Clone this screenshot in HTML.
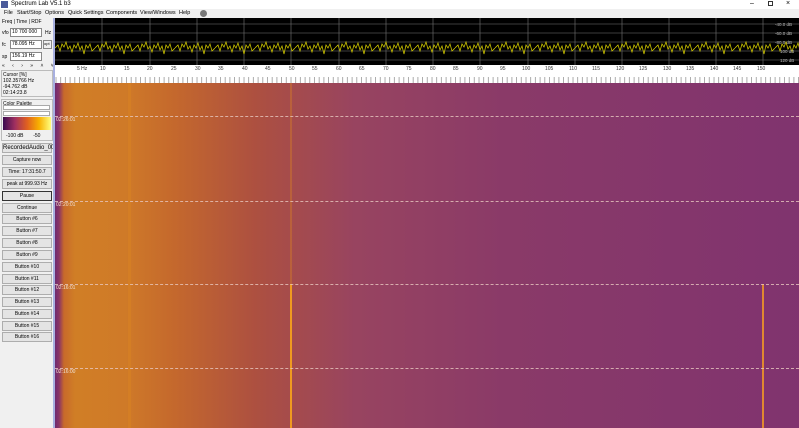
<!DOCTYPE html>
<html><head><meta charset="utf-8"><style>
*{margin:0;padding:0;box-sizing:border-box}
body{width:799px;height:428px;overflow:hidden;background:#f0f0f0;font-family:"Liberation Sans",sans-serif;position:relative;font-size:6px;color:#000}
.a{position:absolute}
.btn{position:absolute;left:2px;width:50px;height:10px;background:#e4e4e4;border:1px solid #adadad;font-size:5px;text-align:center;line-height:8px}
.m{position:absolute;top:10px;font-size:5.5px;white-space:nowrap}
.wf{left:55px;top:83px;width:744px;height:345px;background:linear-gradient(90deg,#6e2a6e 0,#8a3466 4px,#c86a2a 9px,#d07e26 20px,#cf7a28 70px,#c4682d 120px,#ad5040 200px,#984460 300px,#8a3a68 450px,#7e3270 800px)}
.dash{position:absolute;left:0;width:744px;border-top:1px dashed #e8c8c0;opacity:.8}
.ts{position:absolute;left:1px;font-size:5px;color:#f0e0d0}
</style></head><body>
<div class="a" style="left:0;top:0;width:799px;height:9px;background:#fff"></div>
<div class="a" style="left:1px;top:1px;width:7px;height:7px;background:#4a5a9a"></div>
<div class="a" style="left:11px;top:1px;font-size:6px">Spectrum Lab V5.1 b3</div>
<div class="a" style="left:750px;top:0;font-size:7px">–</div>
<div class="a" style="left:768px;top:1px;width:5px;height:5px;border:1px solid #333"></div>
<div class="a" style="left:786px;top:0;font-size:7px">×</div>
<div class="m" style="left:4px">File</div>
<div class="m" style="left:17px">Start/Stop</div>
<div class="m" style="left:45px">Options</div>
<div class="m" style="left:68px">Quick Settings</div>
<div class="m" style="left:106px">Components</div>
<div class="m" style="left:140px">View/Windows</div>
<div class="m" style="left:179px">Help</div>
<div class="a" style="left:200px;top:10px;width:7px;height:7px;border-radius:50%;background:#777"></div>
<!-- left panel -->
<div class="a" style="left:2px;top:19px;font-size:5px">Freq | Time | RDF</div>
<div class="a" style="left:2px;top:30px;font-size:5px">vfo</div><div class="a" style="left:10px;top:28px;width:32px;height:9px;background:#fff;border:1px solid #888;font-size:5px;padding-left:1px">10 700 000</div><div class="a" style="left:45px;top:30px;font-size:5px">Hz</div>
<div class="a" style="left:2px;top:42px;font-size:5px">fc</div><div class="a" style="left:10px;top:40px;width:32px;height:9px;background:#fff;border:1px solid #888;font-size:5px;padding-left:1px">78.095 Hz</div><div class="a" style="left:43px;top:40px;width:9px;height:9px;border:1px solid #888;font-size:4px">opt</div>
<div class="a" style="left:2px;top:54px;font-size:5px">sp</div><div class="a" style="left:10px;top:52px;width:32px;height:9px;background:#fff;border:1px solid #888;font-size:5px;padding-left:1px">156.19 Hz</div>
<div class="a" style="left:2px;top:63px;font-size:5px;letter-spacing:3px">« ‹ › » ˄ ˅</div>
<div class="a" style="left:1px;top:70px;width:52px;height:27px;border:1px solid #bbb;font-size:5px;line-height:6px;padding:1px">Cursor [%]<br>102.35766 Hz<br>-94.762 dB<br>02:14:23.8</div>
<div class="a" style="left:1px;top:99px;width:52px;height:42px;border:1px solid #bbb;font-size:5px;padding:1px">Color Palette</div>
<div class="a" style="left:3px;top:105px;width:47px;height:5px;background:#fff;border:1px solid #aaa"></div>
<div class="a" style="left:3px;top:111px;width:47px;height:5px;background:#fff;border:1px solid #aaa"></div>
<div class="a" style="left:3px;top:117px;width:48px;height:13px;background:linear-gradient(90deg,#3a0a50,#a03060,#e06020,#f8b000,#ffff80)"></div>
<div class="a" style="left:6px;top:133px;font-size:5px">-100 dB &nbsp; &nbsp; &nbsp; -50</div>
<div class="btn" style="top:143px;font-size:6px">RecordedAudio_004.</div>
<div class="btn" style="top:155px">Capture now</div>
<div class="btn" style="top:167px">Time: 17:31:50.7</div>
<div class="btn" style="top:179px">peak at 999.93 Hz</div>
<div class="btn" style="top:191px;border:1px solid #333">Pause</div>
<div class="btn" style="top:203px">Continue</div>
<div class="btn" style="top:214px">Button #6</div>
<div class="btn" style="top:226px">Button #7</div>
<div class="btn" style="top:238px">Button #8</div>
<div class="btn" style="top:250px">Button #9</div>
<div class="btn" style="top:262px">Button #10</div>
<div class="btn" style="top:274px">Button #11</div>
<div class="btn" style="top:285px">Button #12</div>
<div class="btn" style="top:297px">Button #13</div>
<div class="btn" style="top:309px">Button #14</div>
<div class="btn" style="top:321px">Button #15</div>
<div class="btn" style="top:332px">Button #16</div>
<div class="a" style="left:53px;top:18px;width:2px;height:410px;background:#a8b0e0"></div>
<!-- spectrum -->
<svg class="a" style="left:55px;top:18px" width="744" height="47">
<rect width="744" height="47" fill="#000"/>
<g stroke="#777" stroke-width=".6">
<line x1="0" y1="6" x2="744" y2="6"/><line x1="0" y1="15" x2="744" y2="15"/><line x1="0" y1="24" x2="744" y2="24"/><line x1="0" y1="33" x2="744" y2="33"/><line x1="0" y1="42" x2="744" y2="42"/>
<line x1="47" y1="0" x2="47" y2="47"/><line x1="95" y1="0" x2="95" y2="47"/><line x1="142" y1="0" x2="142" y2="47"/><line x1="189" y1="0" x2="189" y2="47"/><line x1="236" y1="0" x2="236" y2="47"/><line x1="284" y1="0" x2="284" y2="47"/><line x1="331" y1="0" x2="331" y2="47"/><line x1="378" y1="0" x2="378" y2="47"/><line x1="425" y1="0" x2="425" y2="47"/><line x1="473" y1="0" x2="473" y2="47"/><line x1="520" y1="0" x2="520" y2="47"/><line x1="567" y1="0" x2="567" y2="47"/><line x1="614" y1="0" x2="614" y2="47"/><line x1="661" y1="0" x2="661" y2="47"/><line x1="708" y1="0" x2="708" y2="47"/>
</g>
<defs><pattern id="p" width="40" height="47" patternUnits="userSpaceOnUse"><polyline fill="none" stroke="#c8c000" stroke-width=".8" points="0,30 3,27 5,33 7,26 9,29 11,24 13,31 15,28 17,34 19,27 21,30 23,25 25,32 27,28 29,36 31,27 33,30 35,26 37,33 40,30"/></pattern></defs>
<rect x="0" y="0" width="744" height="47" fill="url(#p)"/>
<g fill="#bbb" font-size="4.5"><text x="720" y="8">-40.0 dB</text><text x="720" y="17">-60.0 dB</text><text x="720" y="26">-80.0 dB</text><text x="725" y="35">100 dB</text><text x="725" y="44">120 dB</text></g>
</svg>
<!-- scale -->
<svg class="a" style="left:55px;top:65px" width="744" height="18">
<rect width="744" height="18" fill="#fff"/>
<g font-size="5" fill="#333"><text x="22" y="5">5 Hz</text><text x="45" y="5">10</text><text x="69" y="5">15</text><text x="92" y="5">20</text><text x="116" y="5">25</text><text x="140" y="5">30</text><text x="163" y="5">35</text><text x="187" y="5">40</text><text x="210" y="5">45</text><text x="234" y="5">50</text><text x="257" y="5">55</text><text x="281" y="5">60</text><text x="304" y="5">65</text><text x="328" y="5">70</text><text x="351" y="5">75</text><text x="375" y="5">80</text><text x="398" y="5">85</text><text x="422" y="5">90</text><text x="445" y="5">95</text><text x="467" y="5">100</text><text x="490" y="5">105</text><text x="514" y="5">110</text><text x="537" y="5">115</text><text x="561" y="5">120</text><text x="584" y="5">125</text><text x="608" y="5">130</text><text x="631" y="5">135</text><text x="655" y="5">140</text><text x="678" y="5">145</text><text x="702" y="5">150</text></g>
<defs><pattern id="t" width="4.7" height="18" patternUnits="userSpaceOnUse"><line x1="1" y1="12" x2="1" y2="18" stroke="#888" stroke-width=".7"/></pattern></defs>
<rect y="0" width="744" height="18" fill="url(#t)"/>
</svg>
<!-- waterfall -->
<div class="a wf">
<div class="a" style="left:73px;top:0;width:3px;height:345px;background:#e08a20;opacity:.35"></div>
<div class="a" style="left:235px;top:0;width:2px;height:201px;background:#e08a20;opacity:.35"></div>
<div class="a" style="left:235px;top:201px;width:2px;height:144px;background:#f09a20"></div>
<div class="a" style="left:707px;top:201px;width:2px;height:144px;background:#e08830"></div>
<div class="dash" style="top:33px"></div><div class="ts" style="top:34px">02:26:01</div>
<div class="dash" style="top:118px"></div><div class="ts" style="top:119px">02:20:01</div>
<div class="dash" style="top:201px"></div><div class="ts" style="top:202px">02:16:01</div>
<div class="dash" style="top:285px"></div><div class="ts" style="top:286px">02:16:00</div>
</div>
</body></html>
